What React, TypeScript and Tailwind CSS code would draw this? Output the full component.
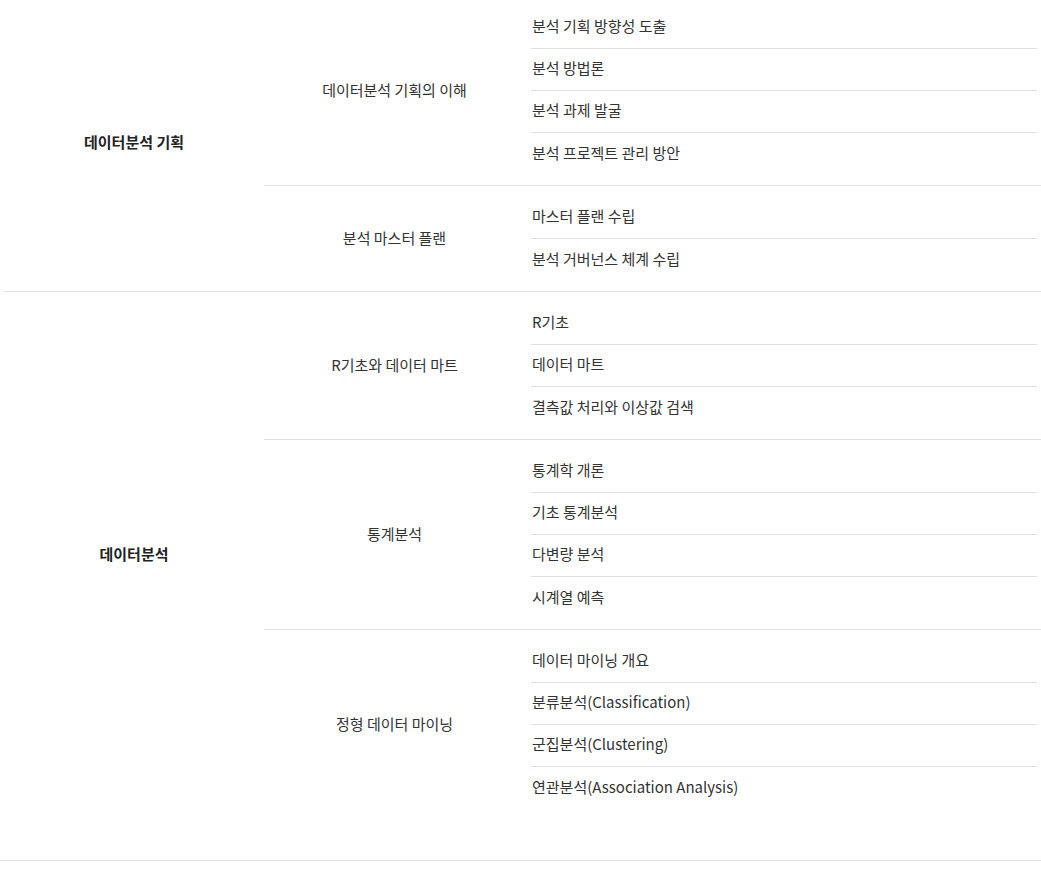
const curriculum = [
  {
    title: "데이터분석 기획",
    groups: [
      {
        name: "데이터분석 기획의 이해",
        items: [
          "분석 기획 방향성 도출",
          "분석 방법론",
          "분석 과제 발굴",
          "분석 프로젝트 관리 방안",
        ],
      },
      {
        name: "분석 마스터 플랜",
        items: ["마스터 플랜 수립", "분석 거버넌스 체계 수립"],
      },
    ],
  },
  {
    title: "데이터분석",
    groups: [
      {
        name: "R기초와 데이터 마트",
        items: ["R기초", "데이터 마트", "결측값 처리와 이상값 검색"],
      },
      {
        name: "통계분석",
        items: ["통계학 개론", "기초 통계분석", "다변량 분석", "시계열 예측"],
      },
      {
        name: "정형 데이터 마이닝",
        items: [
          "데이터 마이닝 개요",
          "분류분석(Classification)",
          "군집분석(Clustering)",
          "연관분석(Association Analysis)",
        ],
      },
    ],
  },
];

const App = () => {
  return (
    <div className="w-[1041px] bg-white font-['Noto_Sans_CJK_KR','Noto_Sans',sans-serif] text-[15px] text-[#333] -mt-[4px]">
      <div className="ml-[4px]">
        {curriculum.map((section, si) => (
          <div
            key={section.title}
            className={`flex ${si < curriculum.length - 1 ? "border-b border-[#e1e1e1]" : ""}`}
          >
            <div className="w-[260px] flex items-center justify-center pb-[3px] font-bold text-[#222]">
              {section.title}
            </div>
            <div className="flex-1 flex flex-col">
              {section.groups.map((group, gi) => (
                <div
                  key={group.name}
                  className={`flex pt-[11px] pb-[10px] ${gi < section.groups.length - 1 ? "border-b border-[#e1e1e1]" : ""}`}
                >
                  <div className="w-[261px] flex items-center justify-center pb-[2px]">
                    {group.name}
                  </div>
                  <div className="flex-1 ml-[6px] mr-[4px] flex flex-col">
                    {group.items.map((item, ii) => (
                      <div
                        key={item}
                        className={`h-[42px] flex items-center pl-[1px] pb-[2px] ${ii < group.items.length - 1 ? "border-b border-[#e1e1e1]" : ""}`}
                      >
                        {item}
                      </div>
                    ))}
                  </div>
                </div>
              ))}
            </div>
          </div>
        ))}
      </div>
      <div className="h-[42px] border-b border-[#e1e1e1]" />
    </div>
  );
};

export default App;
